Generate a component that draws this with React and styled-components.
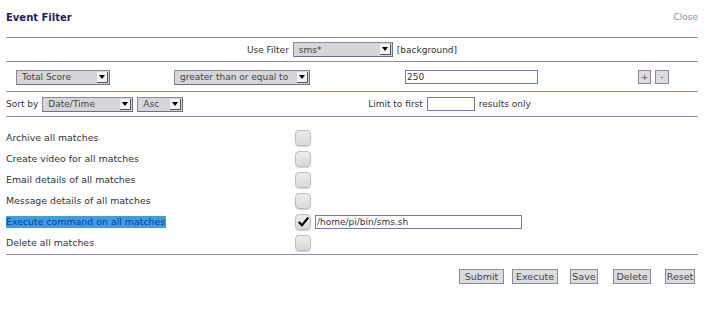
import React from 'react'
import styled, { createGlobalStyle } from 'styled-components'

const GlobalStyle = createGlobalStyle`
	body {
		margin: 0;
		background: #fff;
		font-family: "DejaVu Sans", Verdana, sans-serif;
		font-size: 9px;
		color: #333;
	}
`

const Panel = styled.div`
	width: 692px;
	margin: 0 6px;
`

const Header = styled.div`
	height: 38px;
	display: flex;
	justify-content: space-between;
	align-items: center;
	border-bottom: 1px solid #8e8ca8;
	box-sizing: border-box;
	padding-bottom: 3px;
`

const Title = styled.div`
	font-size: 10px;
	font-weight: bold;
	color: #1e1e5e;
`

const CloseLink = styled.a`
	color: #8c8cae;
	text-decoration: none;
`

const Row = styled.div`
	height: ${p => p.$h}px;
	box-sizing: border-box;
	border-bottom: 1px solid #8e8ca8;
	display: flex;
	align-items: center;
	justify-content: ${p => (p.$center ? 'center' : 'flex-start')};
	gap: 4px;
`

const CriteriaRow = styled(Row)`
	display: grid;
	grid-template-columns: 158px 231px 233px 1fr;
	gap: 0;
	padding-left: 10px;
	padding-top: 1px;
`

const SortRow = styled(Row)`
	display: grid;
	grid-template-columns: 195px 1fr;
	gap: 0;
`

const Inline = styled.div`
	display: flex;
	align-items: center;
	justify-content: ${p => (p.$center ? 'center' : 'flex-start')};
	gap: 4px;
`

const SelectBox = styled.span`
	display: inline-flex;
	align-items: center;
	justify-content: space-between;
	box-sizing: border-box;
	width: ${p => p.$w}px;
	height: 15px;
	padding-left: 5px;
	background: #d6d6da;
	border: 1px solid #8a88a4;
	border-right-color: #6e6c88;
	border-bottom-color: #6e6c88;
	color: #444;
	font-size: 9px;
`

const Arrow = styled.span`
	width: 11px;
	height: 11px;
	margin-right: 1px;
	background: #f2f2f2;
	border-right: 1px solid #555;
	border-bottom: 1px solid #555;
	box-sizing: border-box;
	display: flex;
	align-items: center;
	justify-content: center;
	&::after {
		content: '';
		border-left: 3px solid transparent;
		border-right: 3px solid transparent;
		border-top: 4px solid #000;
	}
`

const TextInput = styled.span`
	display: inline-flex;
	align-items: center;
	box-sizing: border-box;
	width: ${p => p.$w}px;
	height: 14px;
	padding-left: 1px;
	background: #fff;
	border: 1px solid #7c7a98;
	color: #333;
	font-size: 9px;
`

const SmallBtn = styled.span`
	display: inline-flex;
	align-items: center;
	justify-content: center;
	width: ${p => p.$w}px;
	height: 14px;
	box-sizing: border-box;
	background: #dcdce0;
	border: 1px solid #8a88a4;
	color: #555;
	font-size: 8px;
`

const Actions = styled.div`
	padding-top: 10px;
	padding-bottom: 1px;
	border-bottom: 1px solid #8e8ca8;
`

const ActionRow = styled.div`
	height: 21px;
	display: grid;
	grid-template-columns: 289px 1fr;
	align-items: center;
`

const Label = styled.span`
	justify-self: start;
	background: ${p => (p.$selected ? '#3d9ce8' : 'transparent')};
	color: ${p => (p.$selected ? '#123f86' : '#333')};
	font-size: 9.4px;
	line-height: 12px;
	padding-right: ${p => (p.$selected ? 1 : 0)}px;
`

const Check = styled.span`
	width: 16px;
	height: 16px;
	box-sizing: border-box;
	border-radius: 4px;
	border: 1px solid #bdbdbd;
	background: linear-gradient(#ececec, #d9d9d9);
	box-shadow: 0 1px 1px rgba(0, 0, 0, 0.18);
	display: flex;
	align-items: center;
	justify-content: center;
`

const Footer = styled.div`
	display: flex;
	justify-content: flex-end;
	padding-top: 14px;
	padding-right: 3px;
`

const Button = styled.span`
	display: inline-flex;
	align-items: center;
	justify-content: center;
	width: ${p => p.$w}px;
	height: 15px;
	box-sizing: border-box;
	margin-left: ${p => p.$ml}px;
	background: #dcdce0;
	border: 1px solid #8a88a4;
	color: #444;
	font-size: 9.5px;
`

const Select = ({ w, children }) => (
	<SelectBox $w={w}>
		{children}
		<Arrow />
	</SelectBox>
)

const actions = [
	{ label: 'Archive all matches' },
	{ label: 'Create video for all matches' },
	{ label: 'Email details of all matches' },
	{ label: 'Message details of all matches' },
	{ label: 'Execute command on all matches', checked: true, selected: true, command: '/home/pi/bin/sms.sh' },
	{ label: 'Delete all matches' },
]

const buttons = [
	{ text: 'Submit', w: 45, ml: 0 },
	{ text: 'Execute', w: 46, ml: 8 },
	{ text: 'Save', w: 28, ml: 12 },
	{ text: 'Delete', w: 38, ml: 15 },
	{ text: 'Reset', w: 30, ml: 14 },
]

const App = () => (
	<>
		<GlobalStyle />
		<Panel>
			<Header>
				<Title>Event Filter</Title>
				<CloseLink href="#">Close</CloseLink>
			</Header>
			<Row $h={24} $center>
				<span>Use Filter</span>
				<Select w={100}>sms*</Select>
				<span>[background]</span>
			</Row>
			<CriteriaRow $h={30}>
				<Select w={94}>Total Score</Select>
				<Select w={136}>greater than or equal to</Select>
				<TextInput $w={133}>250</TextInput>
				<Inline>
					<SmallBtn $w={13}>+</SmallBtn>
					<SmallBtn $w={14}>-</SmallBtn>
				</Inline>
			</CriteriaRow>
			<SortRow $h={25}>
				<Inline>
					<span>Sort by</span>
					<Select w={91}>Date/Time</Select>
					<Select w={46}>Asc</Select>
				</Inline>
				<Inline $center>
					<span>Limit to first</span>
					<TextInput $w={48} />
					<span>results only</span>
				</Inline>
			</SortRow>
			<Actions>
				{actions.map(a => (
					<ActionRow key={a.label}>
						<Label $selected={a.selected}>{a.label}</Label>
						<Inline>
							<Check>
								{a.checked && (
									<svg width="13" height="13" viewBox="0 0 13 13">
										<path d="M1.8 7 L5 10.2 L11.2 2.6" fill="none" stroke="#000" strokeWidth="2.2" />
									</svg>
								)}
							</Check>
							{a.command && <TextInput $w={207}>{a.command}</TextInput>}
						</Inline>
					</ActionRow>
				))}
			</Actions>
			<Footer>
				{buttons.map(b => (
					<Button key={b.text} $w={b.w} $ml={b.ml}>{b.text}</Button>
				))}
			</Footer>
		</Panel>
	</>
)

export default App
